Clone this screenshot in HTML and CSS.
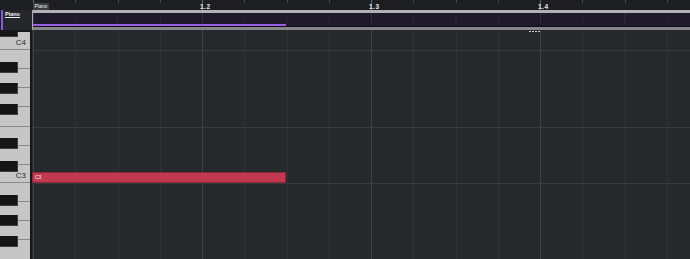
FILE: index.html
```html
<!DOCTYPE html>
<html lang="en">
<head>
    <meta charset="UTF-8">
    <meta name="viewport" content="width=device-width, initial-scale=1.0">
    <title>Piano Roll</title>
    <link rel="stylesheet" href="styles.css">
</head>
<body>
    <div class="editor">
        <div class="corner"></div>

        <div class="ruler">
            <span class="ruler-tab">Piano</span>
            <span class="ruler-label" style="left: 168px">1.2</span>
            <span class="ruler-label" style="left: 337px">1.3</span>
            <span class="ruler-label" style="left: 506px">1.4</span>
        </div>

        <div class="track-head">
            <span class="track-name">Piano</span>
        </div>

        <div class="lane">
            <div class="region">
                <div class="region-top"></div>
                <div class="region-body"></div>
                <div class="region-strip">
                    <div class="region-note" style="width: 253px"></div>
                </div>
                <div class="region-gap"></div>
                <div class="region-foot"></div>
            </div>
        </div>

        <div class="keys">
            <div class="white c">C4</div>
            <div class="white"></div>
            <div class="white"></div>
            <div class="white"></div>
            <div class="white f"></div>
            <div class="white"></div>
            <div class="white"></div>
            <div class="white c">C3</div>
            <div class="white"></div>
            <div class="white"></div>
            <div class="white"></div>
            <div class="white f"></div>

            <div class="black" style="top: -6px"></div>
            <div class="black" style="top: 30px"></div>
            <div class="black" style="top: 51px"></div>
            <div class="black" style="top: 72px"></div>
            <div class="black" style="top: 106px"></div>
            <div class="black" style="top: 129px"></div>
            <div class="black" style="top: 163px"></div>
            <div class="black" style="top: 183px"></div>
            <div class="black" style="top: 204px"></div>
        </div>

        <div class="roll">
            <div class="handle"><i></i><i></i><i></i><i></i></div>
            <div class="note" style="top: 142px; width: 254px">C3</div>
        </div>
    </div>
</body>
</html>
```

FILE: styles.css
```css
* {
    box-sizing: border-box;
}

body {
    margin: 0;
    background-color: #1d1e21;
    font-family: "Liberation Sans", Arial, sans-serif;
    overflow: hidden;
}

.editor {
    display: grid;
    grid-template-columns: 32px 1fr;
    grid-template-rows: 10px 20px 229px;
    width: 690px;
    height: 259px;
}

.corner {
    background-color: #1d1e21;
}

/* ruler */

.ruler {
    position: relative;
    display: flex;
    align-items: flex-start;
    padding: 3px 0 0 1px;
    background:
        repeating-linear-gradient(90deg, #64676b 0 1px, transparent 1px 169px) 1px 0 / 100% 100% no-repeat,
        repeating-linear-gradient(90deg, #45484c 0 1px, transparent 1px 42.25px) 1px 0 / 100% 3px no-repeat,
        #1d1e21;
}

.ruler-tab {
    position: relative;
    width: 16px;
    height: 7px;
    background-color: #3a3d41;
    color: #ececec;
    font-size: 5px;
    line-height: 7px;
    text-align: center;
}

.ruler-label {
    position: absolute;
    top: 3px;
    color: #ececec;
    font-size: 6.5px;
    font-weight: bold;
    line-height: 7px;
    letter-spacing: 0.5px;
}

/* track header */

.track-head {
    margin-left: 1px;
    padding: 2px 0 0 2px;
    border-left: 2px solid #8a5bd4;
    background-color: #24272a;
}

.track-name {
    display: block;
    color: #f2f2f2;
    font-size: 5.5px;
    font-weight: bold;
    line-height: 5px;
    text-decoration: underline;
}

/* region lane */

.lane {
    background-color: #1e1a2c;
}

.region {
    display: flex;
    flex-direction: column;
    height: 20px;
    border-left: 1px solid #a9a9ad;
}

.region-top {
    height: 3px;
    background-color: #b2b2b6;
}

.region-body {
    height: 11px;
    background:
        repeating-linear-gradient(90deg, #302b40 0 1px, transparent 1px 169px) 0 0 / 100% 100% no-repeat,
        repeating-linear-gradient(90deg, #262237 0 1px, transparent 1px 42.25px) 0 0 / 100% 100% no-repeat,
        #1e1a2c;
}

.region-strip {
    height: 2px;
    background-color: #1e1a2c;
}

.region-note {
    height: 2px;
    background-color: #9a5ce2;
}

.region-gap {
    height: 1px;
    background-color: #0e0e11;
}

.region-foot {
    height: 3px;
    background-color: #86868a;
}

/* keyboard */

.keys {
    position: relative;
    overflow: hidden;
    border-top: 2px solid #17181a;
    border-right: 2px solid #17181a;
    background-color: #c4c4c4;
}

.white {
    display: flex;
    justify-content: flex-end;
    align-items: flex-end;
    height: 19px;
    padding: 0 4px 2px 0;
    border-bottom: 1px solid #8a8a8a;
    background-color: #c6c6c6;
    color: #2a2a2a;
    font-size: 8px;
    line-height: 8px;
}

.white.c {
    height: 18px;
}

.white.f {
    height: 20px;
}

.black {
    position: absolute;
    left: 0;
    width: 18px;
    height: 11px;
    background-color: #151515;
    border-right: 1px solid #3e3e3e;
    border-bottom: 1px solid #3e3e3e;
}

/* note grid */

.roll {
    position: relative;
    background:
        linear-gradient(#343a3e, #343a3e) 0 20px / 100% 1px no-repeat,
        linear-gradient(#343a3e, #343a3e) 0 97px / 100% 1px no-repeat,
        linear-gradient(#343a3e, #343a3e) 0 153px / 100% 1px no-repeat,
        repeating-linear-gradient(90deg, #3d4246 0 1px, transparent 1px 169px) 1px 0 / 100% 100% no-repeat,
        repeating-linear-gradient(90deg, #2e3336 0 1px, transparent 1px 42.25px) 1px 0 / 100% 100% no-repeat,
        #25292c;
}

.handle {
    position: absolute;
    top: 1px;
    left: 497px;
    display: flex;
    gap: 1px;
}

.handle i {
    width: 2px;
    height: 1px;
    background-color: #cfcfcf;
}

.note {
    position: absolute;
    left: 0;
    height: 11px;
    padding-left: 2px;
    border: 1px solid #8f2738;
    background-color: #c1394e;
    color: #f4f4f4;
    font-size: 5px;
    line-height: 9px;
}
```
